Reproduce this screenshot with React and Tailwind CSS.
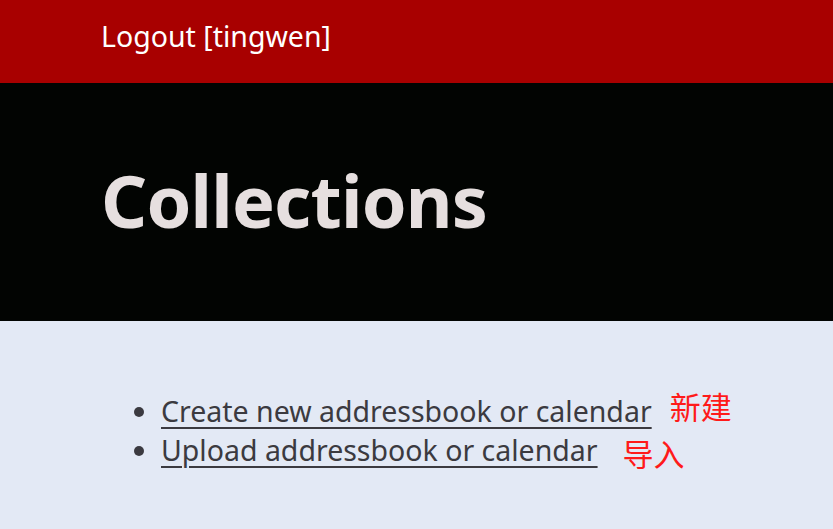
export default function App() {
  return (
    <div className="min-h-screen bg-[#e3e9f5]" style={{ fontFamily: '"Noto Sans", "Noto Sans CJK SC", sans-serif' }}>
      {/* top bar */}
      <div className="h-[83px] bg-[#a80000] flex items-center pl-[101px] pb-[10px]">
        <a className="text-white text-[28.5px] leading-none">Logout [tingwen]</a>
      </div>

      {/* title */}
      <div className="h-[238px] bg-[#020402] flex items-center pl-[101px] pb-[4px]">
        <h1 className="text-[#e6dfdf] text-[72px] font-bold leading-none tracking-[-0.8px]">Collections</h1>
      </div>

      {/* actions */}
      <ul className="pt-[71px] pl-[161px] list-disc text-[#3b3a40] text-[28.5px] leading-[39px] marker:text-[#3b3a40]">
        <li>
          <a className="underline decoration-2 underline-offset-[5px]">Create new addressbook or calendar</a>
          <span className="ml-[18px] text-[#ff1a1a] text-[31px] leading-none relative -top-[3px]" style={{ fontFamily: '"Noto Sans CJK SC", sans-serif' }}>新建</span>
        </li>
        <li>
          <a className="underline decoration-2 underline-offset-[5px]">Upload addressbook or calendar</a>
          <span className="ml-[25px] text-[#ff1a1a] text-[31px] leading-none relative top-[5px]" style={{ fontFamily: '"Noto Sans CJK SC", sans-serif' }}>导入</span>
        </li>
      </ul>
    </div>
  );
}
